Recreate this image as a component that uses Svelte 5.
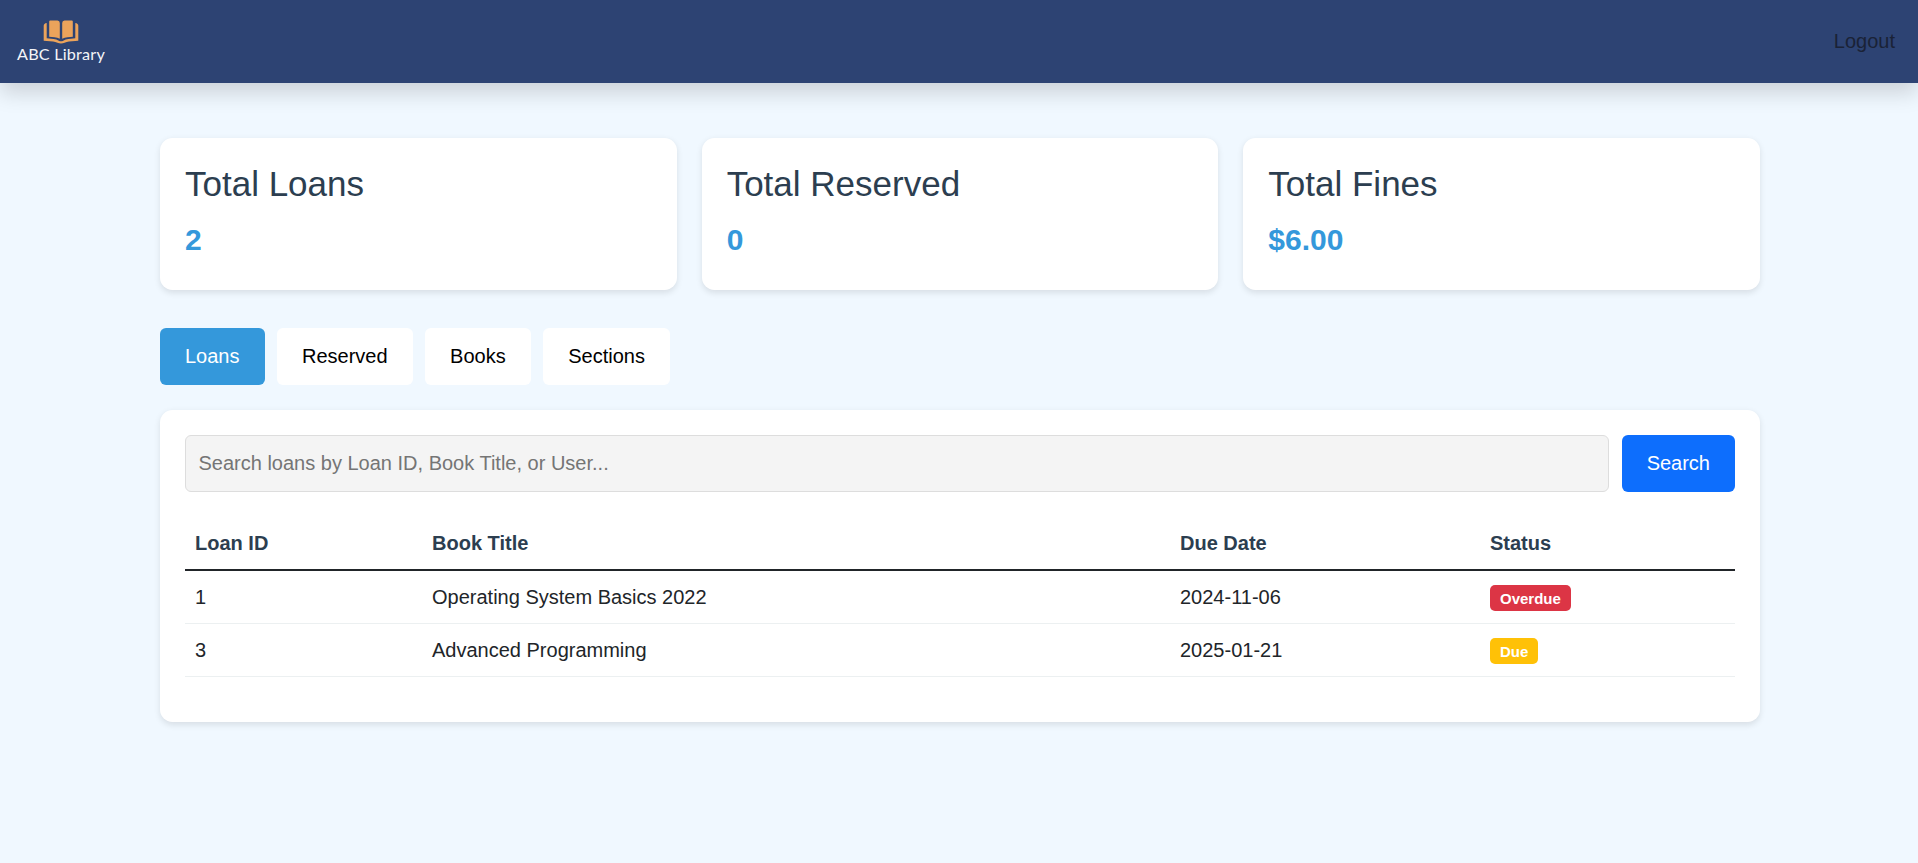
<script>
  const stats = [
    { title: 'Total Loans', value: '2' },
    { title: 'Total Reserved', value: '0' },
    { title: 'Total Fines', value: '$6.00' }
  ];
  const tabs = ['Loans', 'Reserved', 'Books', 'Sections'];
  const loans = [
    { id: 1, title: 'Operating System Basics 2022', due: '2024-11-06', status: 'Overdue' },
    { id: 3, title: 'Advanced Programming', due: '2025-01-21', status: 'Due' }
  ];
  let active = $state('Loans');
  let query = $state('');
</script>

<div class="page">
  <header>
    <div class="brand">
      <svg class="book" width="36" height="24" viewBox="0 0 36 24" aria-hidden="true">
        <g fill="#eba35b">
          <path d="M7.200 .5H14.500Q16.800 .7 16.800 2.900V18.800Q14.500 17.500 11.500 17.200L6.200 16.800V1.500Q6.200 .5 7.200 .5z" />
          <path d="M28.800 .5H21.500Q19.200 .7 19.200 2.900V18.800Q21.500 17.500 24.500 17.200L29.800 16.800V1.500Q29.800 .5 28.800 .5z" />
          <path d="M3.700 3V18.300L10.500 19Q13.500 19.300 15.800 20.700Q18 21.800 20.200 20.700Q22.500 19.300 25.500 19L32.300 18.300V3Q35.300 3.500 35.300 5.800V20.800L26 21.600Q23.600 21.800 21.600 22.800Q18 24.200 14.400 22.800Q12.400 21.800 10 21.600L.7 20.800V5.800Q.7 3.500 3.700 3z" />
        </g>
      </svg>
      <span class="name">ABC Library</span>
    </div>
    <a class="logout" href="#logout">Logout</a>
  </header>

  <main>
    <section class="stats">
      {#each stats as s}
        <div class="card">
          <h3>{s.title}</h3>
          <p>{s.value}</p>
        </div>
      {/each}
    </section>

    <nav class="tabs">
      {#each tabs as t}
        <button class:active={active === t} onclick={() => (active = t)}>{t}</button>
      {/each}
    </nav>

    <section class="panel">
      <div class="search">
        <input placeholder="Search loans by Loan ID, Book Title, or User..." bind:value={query} />
        <button>Search</button>
      </div>
      <table>
        <colgroup><col class="c1" /><col class="c2" /><col class="c3" /><col /></colgroup>
        <thead>
          <tr><th>Loan ID</th><th>Book Title</th><th>Due Date</th><th>Status</th></tr>
        </thead>
        <tbody>
          {#each loans as l}
            <tr>
              <td>{l.id}</td>
              <td>{l.title}</td>
              <td>{l.due}</td>
              <td><span class="badge" class:late={l.status === 'Overdue'}>{l.status}</span></td>
            </tr>
          {/each}
        </tbody>
      </table>
    </section>
  </main>
</div>

<style>
  :global(body) { margin: 0; background: #f0f8ff; }
  .page, button, input {
    font-family: "Liberation Sans", Arial, sans-serif;
    font-size: 20px;
    line-height: 32px;
  }
  .page { min-height: 863px; box-sizing: border-box; color: #212529; background: #f0f8ff; }
  header {
    height: 83px;
    box-sizing: border-box;
    padding: 0 23px 0 17px;
    display: flex;
    align-items: center;
    justify-content: space-between;
    background: #2d4373;
    box-shadow: 0 10px 20px rgba(0, 0, 0, 0.15);
  }
  .brand { display: flex; flex-direction: column; align-items: center; width: 88px; }
  .book { display: block; }
  .name {
    font-family: Lato, sans-serif;
    font-size: 16.2px;
    line-height: 20px;
    letter-spacing: 0.2px;
    color: #f4f5f8;
    white-space: nowrap;
  }
  .logout { color: #1a2236; text-decoration: none; padding-bottom: 2px; }
  main { width: 1600px; padding: 55px 0 0 160px; }
  .stats { display: grid; grid-template-columns: repeat(3, 1fr); gap: 25px; }
  .card, .panel {
    background: #fff;
    border-radius: 12.5px;
    padding: 25px;
    box-shadow: 0 2.5px 6px rgba(0, 0, 0, 0.1);
  }
  h3 { margin: 0 0 11px; font-size: 35px; line-height: 42px; font-weight: 400; color: #2c3e50; }
  p { margin: 0 0 1px; font-size: 30px; line-height: 48px; font-weight: 700; color: #3498db; }
  .tabs { display: flex; gap: 12.5px; margin: 38px 0 25px; }
  button {
    border: 0;
    margin: 0;
    padding: 12px 25px 13px;
    border-radius: 6px;
    background: #fff;
    color: #000;
    cursor: pointer;
  }
  button.active { background: #3498db; color: #fff; }
  .search { display: flex; gap: 12.5px; margin-bottom: 25px; }
  .search button { background: #0d6efd; color: #fff; }
  input {
    flex: 1;
    min-width: 0;
    height: 57px;
    box-sizing: border-box;
    padding: 0 12.5px;
    border: 1px solid #ddd;
    border-radius: 6px;
    background: #f4f4f4;
    outline: 0;
  }
  input::placeholder { color: #757575; opacity: 1; }
  table { width: 100%; table-layout: fixed; border-collapse: separate; border-spacing: 0; margin-bottom: 20px; }
  .c1 { width: 237px; }
  .c2 { width: 748px; }
  .c3 { width: 310px; }
  th, td { padding: 10px; height: 32px; text-align: left; border-bottom: 1px solid #ecf0f1; }
  th { color: #2c3e50; font-weight: 700; border-bottom: 2px solid #212529; }
  .badge {
    display: inline-block;
    padding: 6px 10px 5px;
    font-size: 15px;
    line-height: 15px;
    font-weight: 700;
    color: #fff;
    background: #ffc107;
    border-radius: 5px;
    vertical-align: baseline;
  }
  td:last-child { padding-top: 0; padding-bottom: 0; height: 52px; }
  .badge.late { background: #dc3545; }
</style>
